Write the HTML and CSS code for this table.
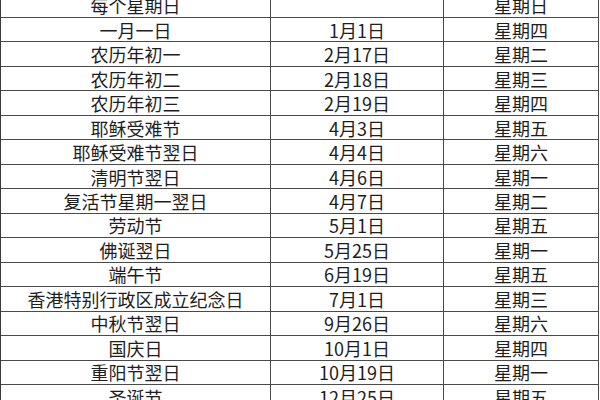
FILE: index.html
```html
<!DOCTYPE html>
<html lang="zh-CN">
<head>
<meta charset="utf-8">
<link rel="stylesheet" href="styles.css">
</head>
<body>
<div class="sheet">
  <div class="cell">每个星期日</div><div class="cell"></div><div class="cell">星期日</div>
  <div class="cell">一月一日</div><div class="cell">1月1日</div><div class="cell">星期四</div>
  <div class="cell">农历年初一</div><div class="cell">2月17日</div><div class="cell">星期二</div>
  <div class="cell">农历年初二</div><div class="cell">2月18日</div><div class="cell">星期三</div>
  <div class="cell">农历年初三</div><div class="cell">2月19日</div><div class="cell">星期四</div>
  <div class="cell">耶稣受难节</div><div class="cell">4月3日</div><div class="cell">星期五</div>
  <div class="cell">耶稣受难节翌日</div><div class="cell">4月4日</div><div class="cell">星期六</div>
  <div class="cell">清明节翌日</div><div class="cell">4月6日</div><div class="cell">星期一</div>
  <div class="cell">复活节星期一翌日</div><div class="cell">4月7日</div><div class="cell">星期二</div>
  <div class="cell">劳动节</div><div class="cell">5月1日</div><div class="cell">星期五</div>
  <div class="cell">佛诞翌日</div><div class="cell">5月25日</div><div class="cell">星期一</div>
  <div class="cell">端午节</div><div class="cell">6月19日</div><div class="cell">星期五</div>
  <div class="cell">香港特别行政区成立纪念日</div><div class="cell">7月1日</div><div class="cell">星期三</div>
  <div class="cell">中秋节翌日</div><div class="cell">9月26日</div><div class="cell">星期六</div>
  <div class="cell">国庆日</div><div class="cell">10月1日</div><div class="cell">星期四</div>
  <div class="cell">重阳节翌日</div><div class="cell">10月19日</div><div class="cell">星期一</div>
  <div class="cell">圣诞节</div><div class="cell">12月25日</div><div class="cell">星期五</div>
</div>
</body>
</html>
```
FILE: styles.css
```css
html, body {
  margin: 0;
  padding: 0;
  background: #ffffff;
  overflow: hidden;
}
.sheet {
  display: grid;
  grid-template-columns: 270px 173px 155px;
  grid-auto-rows: 24.47px;
  width: 599px;
  margin-top: -6.5px;
  border-left: 1px solid #3a3a3a;
  font-family: "Noto Sans CJK SC", "Noto Sans", sans-serif;
  font-size: 18px;
  color: #1e1e1e;
}
.cell {
  box-sizing: border-box;
  border-right: 1px solid #4a4a4a;
  border-bottom: 1px solid #4a4a4a;
  display: flex;
  align-items: center;
  justify-content: center;
  line-height: 1;
  white-space: nowrap;
}
```
